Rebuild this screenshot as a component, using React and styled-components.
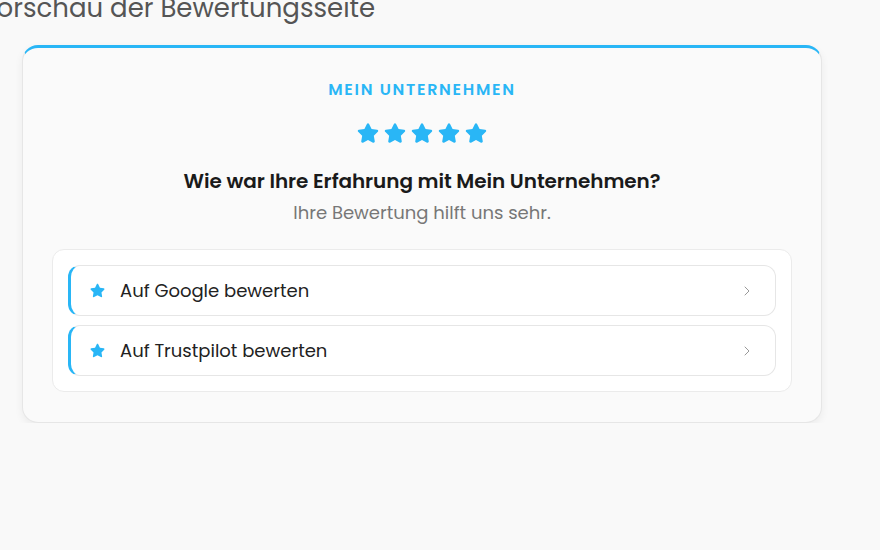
import styled, { createGlobalStyle } from "styled-components";
import { FaStar } from "react-icons/fa";
import { ChevronRight } from "lucide-react";

const BLUE = "#29b6f6";

const GlobalStyle = createGlobalStyle`
  body {
    margin: 0;
    background: #f9f9f9;
    font-family: "Poppins", "Open Sans", sans-serif;
    overflow: hidden;
  }
`;

const Page = styled.div`
  padding: 0 0 0 22px;
  width: 800px;
`;

const Heading = styled.h2`
  margin: -8px 0 21px -43px;
  font-size: 26px;
  font-weight: 400;
  line-height: 32px;
  color: #555;
  white-space: nowrap;
`;

const Card = styled.div`
  background: #fafafa;
  border: 1px solid #e6e6e6;
  border-top: 3px solid ${BLUE};
  border-radius: 16px;
  box-shadow: 0 3px 8px rgba(0, 0, 0, 0.06);
  padding: 30px 29px 30px;
  display: flex;
  flex-direction: column;
  align-items: center;
`;

const Brand = styled.div`
  font-size: 16px;
  font-weight: 600;
  letter-spacing: 1.7px;
  color: ${BLUE};
  line-height: 24px;
`;

const Stars = styled.div`
  display: flex;
  gap: 5px;
  margin-top: 20px;
  color: ${BLUE};
  font-size: 22px;
  line-height: 0;
`;

const Question = styled.div`
  margin-top: 23px;
  font-size: 20px;
  font-weight: 600;
  letter-spacing: -0.07px;
  color: #1a1a1a;
  line-height: 28px;
`;

const Sub = styled.div`
  margin-top: 5px;
  font-size: 18px;
  color: #777;
  line-height: 26px;
`;

const LinkBox = styled.div`
  align-self: stretch;
  margin-top: 23px;
  background: #fff;
  border: 1px solid #ebebeb;
  border-radius: 12px;
  padding: 15px;
  display: flex;
  flex-direction: column;
  gap: 9px;
`;

const LinkRow = styled.div`
  display: flex;
  align-items: center;
  height: 51px;
  box-sizing: border-box;
  background: #fff;
  border: 1px solid #e6e6e6;
  border-left: 3px solid ${BLUE};
  border-radius: 12px;
  padding: 0 20px 0 19px;
  color: ${BLUE};
  font-size: 15px;
`;

const LinkLabel = styled.span`
  flex: 1;
  margin-left: 15px;
  font-size: 18px;
  color: #222;
`;

const links = ["Auf Google bewerten", "Auf Trustpilot bewerten"];

export default function App() {
  return (
    <Page>
      <GlobalStyle />
      <Heading>Vorschau der Bewertungsseite</Heading>
      <Card>
        <Brand>MEIN UNTERNEHMEN</Brand>
        <Stars>
          {[0, 1, 2, 3, 4].map((i) => (
            <FaStar key={i} />
          ))}
        </Stars>
        <Question>Wie war Ihre Erfahrung mit Mein Unternehmen?</Question>
        <Sub>Ihre Bewertung hilft uns sehr.</Sub>
        <LinkBox>
          {links.map((label) => (
            <LinkRow key={label}>
              <FaStar />
              <LinkLabel>{label}</LinkLabel>
              <ChevronRight size={16} color="#999" strokeWidth={1.5} />
            </LinkRow>
          ))}
        </LinkBox>
      </Card>
    </Page>
  );
}
